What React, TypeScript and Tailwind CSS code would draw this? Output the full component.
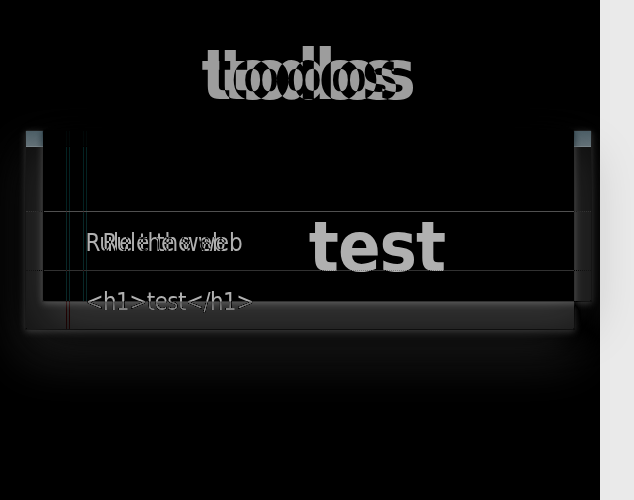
const TAHOMA =
  "font-['Tahoma','DejaVu_Sans_Condensed','DejaVu_Sans',sans-serif] [font-stretch:condensed] text-[#4d4d4d]";

function Row({ text, tracking }: { text: string; tracking: string }) {
  return (
    <li
      className={`h-[59px] border-b border-dotted border-[#ccc] pt-[2px] pl-[59.5px] text-[24px] leading-[58px] whitespace-nowrap last:h-[58px] last:border-b-0 ${tracking}`}
    >
      {text}
    </li>
  );
}

function TodoApp({ escaped }: { escaped: boolean }) {
  return (
    <div className="mx-auto w-[550px]">
      <h1 className="h-[130px] pt-[26px] text-center text-[70px] leading-[98px] font-bold tracking-[-0.4px]">
        todos
      </h1>
      <section className="relative rounded-[2px] border border-[#ccc] bg-white/90 shadow-[0_2px_6px_0_rgba(0,0,0,0.2),0_25px_50px_0_rgba(0,0,0,0.15)]">
        <div className="absolute inset-y-0 left-[40px] w-[4px] border-x border-[#f5d6d6]" />
        <div className="relative h-[16px] border-b border-[#6c615c] bg-gradient-to-b from-[#846e64]/80 to-[#65544c]/80" />
        <div className="h-[64px] bg-black/2" />
        <ul className="relative border-t border-dotted border-[#adadad]">
          <Row text="Rule the web" tracking="tracking-[-0.05px]" />
          {escaped ? (
            <Row text="<h1>test</h1>" tracking="tracking-[-0.6px]" />
          ) : (
            <li className="h-[30px]">
              <h1 className="absolute top-[-14px] left-[60px] w-full text-center text-[70px] leading-[98px] font-bold tracking-[-1px]">
                test
              </h1>
            </li>
          )}
        </ul>
      </section>
    </div>
  );
}

export default function App() {
  return (
    <div className={`isolate grid h-[500px] w-[634px] overflow-hidden bg-black ${TAHOMA}`}>
      <div className="col-start-1 row-start-1 h-[500px] w-[634px] overflow-hidden bg-[#eaeaea]">
        <TodoApp escaped={false} />
      </div>
      <div className="col-start-1 row-start-1 h-[500px] w-[600px] overflow-hidden bg-[#eaeaea] mix-blend-difference">
        <TodoApp escaped />
      </div>
    </div>
  );
}
